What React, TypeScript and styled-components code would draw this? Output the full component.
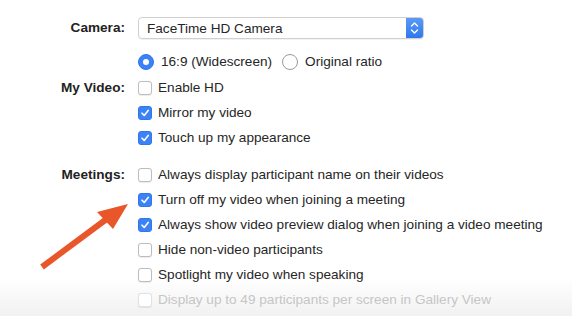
import React from "react";
import styled, { createGlobalStyle } from "styled-components";

const GlobalStyle = createGlobalStyle`
  html, body {
    margin: 0;
    padding: 0;
  }
  body {
    font-family: "Liberation Sans", Arial, sans-serif;
    color: #262626;
  }
`;

const Page = styled.div`
  position: relative;
  width: 572px;
  height: 316px;
  overflow: hidden;
  background: linear-gradient(to bottom, #ffffff 0%, #ffffff 88%, #f1f1f1 100%);
  padding-top: 17px;
  box-sizing: border-box;
`;

const Section = styled.div<{ $gap: number }>`
  display: grid;
  grid-template-columns: 125px 1fr;
  column-gap: 13px;
  margin-top: ${(p) => p.$gap}px;
`;

const Label = styled.div`
  text-align: right;
  font-size: 13.6px;
  font-weight: bold;
  color: #222;
  line-height: 25px;
  height: 25px;
`;

const Options = styled.div`
  display: flex;
  flex-direction: column;
`;

const Row = styled.label<{ $disabled?: boolean }>`
  display: flex;
  align-items: center;
  height: 25px;
  font-size: 13.6px;
  color: ${(p) => (p.$disabled ? "#c6c6c6" : "#262626")};
  white-space: nowrap;
`;

const Box = styled.span<{ $checked?: boolean; $disabled?: boolean }>`
  width: 14px;
  height: 14px;
  box-sizing: border-box;
  border-radius: 3px;
  margin-right: 6px;
  display: inline-flex;
  align-items: center;
  justify-content: center;
  background: ${(p) => (p.$checked ? "#3b82f7" : "#fff")};
  border: 1px solid
    ${(p) => (p.$checked ? "#3077ee" : p.$disabled ? "#e2e2e2" : "#bdbdbd")};
  box-shadow: ${(p) => (p.$checked ? "none" : "0 0.5px 1px rgba(0,0,0,0.08)")};
`;

const Select = styled.div`
  width: 286px;
  height: 22px;
  box-sizing: border-box;
  border: 1px solid #d0d0d0;
  border-radius: 4px;
  box-shadow: 0 1px 1px rgba(0, 0, 0, 0.06);
  display: flex;
  align-items: center;
  overflow: hidden;
`;

const SelectText = styled.span`
  flex: 1;
  padding-left: 8px;
  font-size: 13.6px;
  color: #262626;
`;

const Stepper = styled.span`
  width: 17px;
  height: 100%;
  background: linear-gradient(to bottom, #5a9bf7, #2f77ee);
  display: flex;
  align-items: center;
  justify-content: center;
`;

const CameraRow = styled.div`
  display: flex;
  align-items: center;
  height: 22px;
`;

const CameraLabel = styled(Label)`
  line-height: 22px;
  height: 22px;
`;

const RadioRow = styled.div`
  display: flex;
  align-items: center;
  height: 25px;
  font-size: 13.6px;
`;

const Radio = styled.span<{ $on?: boolean }>`
  width: 16px;
  height: 16px;
  box-sizing: border-box;
  border-radius: 50%;
  margin-right: 7px;
  display: inline-flex;
  align-items: center;
  justify-content: center;
  background: ${(p) => (p.$on ? "#3b82f7" : "#fff")};
  border: 1px solid ${(p) => (p.$on ? "#3077ee" : "#9a9a9a")};

  &::after {
    content: "";
    display: ${(p) => (p.$on ? "block" : "none")};
    width: 6px;
    height: 6px;
    border-radius: 50%;
    background: #fff;
  }
`;

const RadioText = styled.span`
  margin-right: 10px;
`;

const Arrow = styled.svg`
  position: absolute;
  left: 0;
  top: 0;
  pointer-events: none;
`;

const Check = () => (
  <svg width="10" height="10" viewBox="0 0 10 10">
    <path d="M2 5.2 L4.2 7.4 L8.2 2.4" fill="none" stroke="#fff" strokeWidth="1.6" strokeLinecap="round" strokeLinejoin="round" />
  </svg>
);

interface OptionProps {
  text: string;
  checked?: boolean;
  disabled?: boolean;
}

const Option = ({ text, checked, disabled }: OptionProps) => (
  <Row $disabled={disabled}>
    <Box $checked={checked} $disabled={disabled}>
      {checked && <Check />}
    </Box>
    {text}
  </Row>
);

const MEETING_OPTIONS: OptionProps[] = [
  { text: "Always display participant name on their videos" },
  { text: "Turn off my video when joining a meeting", checked: true },
  { text: "Always show video preview dialog when joining a video meeting", checked: true },
  { text: "Hide non-video participants" },
  { text: "Spotlight my video when speaking" },
  { text: "Display up to 49 participants per screen in Gallery View", disabled: true },
];

const App = () => {
  return (
    <Page>
      <GlobalStyle />
      <Section $gap={0}>
        <CameraLabel>Camera:</CameraLabel>
        <CameraRow>
          <Select>
            <SelectText>FaceTime HD Camera</SelectText>
            <Stepper>
              <svg width="9" height="14" viewBox="0 0 9 14">
                <path d="M1.5 5 L4.5 2 L7.5 5 M1.5 9 L4.5 12 L7.5 9" fill="none" stroke="#fff" strokeWidth="1.4" strokeLinecap="round" strokeLinejoin="round" />
              </svg>
            </Stepper>
          </Select>
        </CameraRow>
      </Section>

      <Section $gap={10}>
        <div />
        <RadioRow>
          <Radio $on />
          <RadioText>16:9 (Widescreen)</RadioText>
          <Radio />
          <span>Original ratio</span>
        </RadioRow>
      </Section>

      <Section $gap={1}>
        <Label>My Video:</Label>
        <Options>
          <Option text="Enable HD" />
          <Option text="Mirror my video" checked />
          <Option text="Touch up my appearance" checked />
        </Options>
      </Section>

      <Section $gap={12}>
        <Label>Meetings:</Label>
        <Options>
          {MEETING_OPTIONS.map((o, i) => (
            <Option key={i} {...o} />
          ))}
        </Options>
      </Section>

      <Arrow width="572" height="316" viewBox="0 0 572 316">
        <line x1="42" y1="267" x2="108" y2="218" stroke="#e8562a" strokeWidth="6" strokeLinecap="butt" />
        <polygon points="128,204 97,212 113,229" fill="#e8562a" />
      </Arrow>
    </Page>
  );
};

export default App;
